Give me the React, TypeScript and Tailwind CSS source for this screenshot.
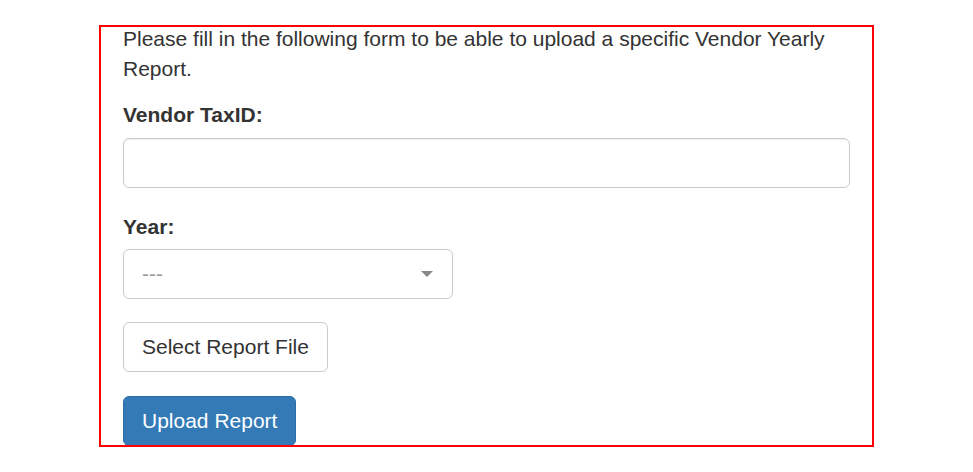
import React from "react";

export default function App() {
  return (
    <div className="w-[973px] h-[472px] bg-white overflow-hidden" style={{ fontFamily: '"Liberation Sans", Arial, Helvetica, sans-serif' }}>
      <div className="ml-[99px] mt-[25px] w-[775px] h-[422px] border-2 border-[#ff0000] overflow-hidden px-[22px] text-[#333333] text-[21px] leading-[30px]">
        <p className="-mt-[3px] mb-[16px]">
          Please fill in the following form to be able to upload a specific Vendor Yearly Report.
        </p>
        <label className="block font-bold h-[30px] mb-[8px]">Vendor TaxID:</label>
        <input
          type="text"
          className="block w-full h-[50px] border border-[#cccccc] rounded-[6px] px-[18px] shadow-[inset_0_1px_1px_rgba(0,0,0,0.075)] outline-none mb-[24px]"
        />
        <label className="block font-bold h-[30px] mb-[7px] mt-[1px]">Year:</label>
        <div className="relative w-[330px] h-[50px] border border-[#cccccc] rounded-[6px] mb-[23px] flex items-center pl-[18px]">
          <span className="text-[#999999]">---</span>
          <svg className="absolute left-[297px] top-[21px]" width="12" height="6" viewBox="0 0 12 6">
            <path d="M0 0 L12 0 L6 6 Z" fill="#888888" />
          </svg>
        </div>
        <button className="block h-[50px] px-[18px] border border-[#cccccc] rounded-[6px] bg-white text-[#333333] mb-[24px]">
          Select Report File
        </button>
        <button className="block h-[50px] px-[18px] border border-[#2e6da4] rounded-[6px] bg-[#337ab7] text-white">
          Upload Report
        </button>
      </div>
    </div>
  );
}
